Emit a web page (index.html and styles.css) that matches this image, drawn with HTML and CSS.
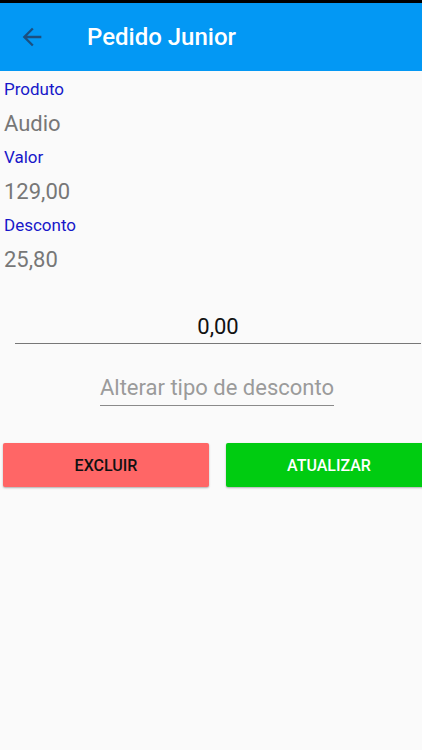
FILE: index.html
```html
<!DOCTYPE html>
<html lang="pt">

<head>
    <meta charset="UTF-8">
    <meta name="viewport" content="width=device-width, initial-scale=1.0">
    <title>Pedido Junior</title>
    <link rel="stylesheet" href="styles.css">
</head>

<body>
    <div class="status-bar"></div>

    <!-- Toolbar -->
    <header class="toolbar">
        <button class="back-btn" type="button" aria-label="Voltar">
            <svg viewBox="0 0 24 24" width="28" height="28">
                <path d="M20 11H7.83l5.59-5.59L12 4l-8 8 8 8 1.41-1.41L7.83 13H20v-2z" fill="currentColor" />
            </svg>
        </button>
        <h1 class="toolbar-title">Pedido Junior</h1>
    </header>

    <!-- Item details -->
    <main class="content">
        <div class="field">
            <div class="field-label">Produto</div>
            <div class="field-value">Audio</div>
        </div>
        <div class="field">
            <div class="field-label">Valor</div>
            <div class="field-value">129,00</div>
        </div>
        <div class="field">
            <div class="field-label">Desconto</div>
            <div class="field-value">25,80</div>
        </div>

        <div class="discount-row">
            <input class="discount-input" type="text" value="0,00">
        </div>

        <div class="type-row">
            <span class="type-select">Alterar tipo de desconto</span>
        </div>

        <div class="actions">
            <button class="btn btn-delete" type="button">Excluir</button>
            <button class="btn btn-update" type="button">Atualizar</button>
        </div>
    </main>
</body>

</html>
```

FILE: styles.css
```css
html,
body {
    margin: 0;
    padding: 0;
}

body {
    font-family: Roboto, 'Noto Sans', sans-serif;
    background-color: #fafafa;
    width: 422px;
    height: 750px;
    overflow: hidden;
}

.status-bar {
    height: 3px;
    background: #000;
}

.toolbar {
    display: flex;
    align-items: center;
    height: 68px;
    background-color: #0398f4;
}

.back-btn {
    display: flex;
    align-items: center;
    justify-content: center;
    width: 28px;
    height: 28px;
    margin-left: 18px;
    padding: 0;
    border: none;
    background: none;
    color: #1b4f80;
}

.toolbar-title {
    margin: 0 0 0 41px;
    font-size: 24px;
    font-weight: 500;
    color: #fff;
}

.content {
    padding-top: 8px;
}

.field {
    padding-left: 4px;
    margin-bottom: 6px;
}

.field-label {
    font-size: 17px;
    line-height: 20px;
    color: #1717c9;
}

.field-value {
    margin-top: 8px;
    font-size: 22px;
    line-height: 34px;
    color: #777;
}

.discount-row {
    padding: 27px 1px 0 15px;
}

.discount-input {
    display: block;
    box-sizing: border-box;
    width: 100%;
    height: 34px;
    padding: 0;
    border: none;
    border-bottom: 1px solid #777;
    background: transparent;
    font-family: inherit;
    font-size: 22px;
    color: #111;
    text-align: center;
    outline: none;
}

.type-row {
    display: flex;
    justify-content: center;
    padding: 27px 0 0 12px;
}

.type-select {
    font-size: 22px;
    line-height: 34px;
    color: #9b9b9b;
    border-bottom: 1px solid #8a8a8a;
}

.actions {
    display: flex;
    gap: 17px;
    padding: 37px 0 0 3px;
}

.btn {
    flex: 0 0 206px;
    height: 44px;
    border: none;
    border-radius: 2px;
    box-shadow: 0 1px 2px rgba(0, 0, 0, 0.3);
    font-family: inherit;
    font-size: 16px;
    font-weight: 500;
    text-transform: uppercase;
}

.btn-delete {
    background-color: #ff6666;
    color: #111;
}

.btn-update {
    background-color: #00cc11;
    color: #fff;
}
```
